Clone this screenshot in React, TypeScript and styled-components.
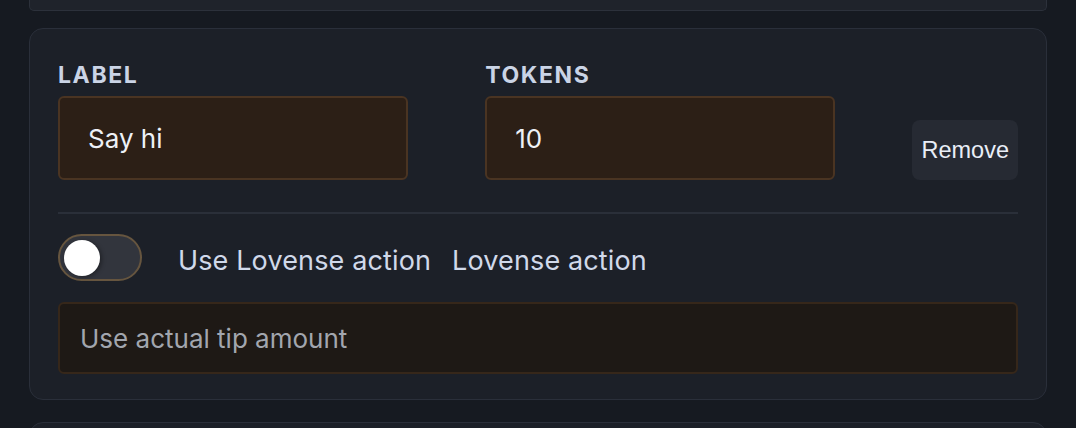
import React, { useState } from 'react';
import styled, { createGlobalStyle } from 'styled-components';

const GlobalStyle = createGlobalStyle`
  html, body {
    margin: 0;
    padding: 0;
    background: #161a21;
    font-family: Inter, "Noto Sans", sans-serif;
    overflow: hidden;
  }
`;

const Page = styled.div`
  padding: 0 29px;
  display: flex;
  flex-direction: column;
`;

const CardStub = styled.div`
  height: 10px;
  background: #1f232b;
  border: 1px solid #2c313b;
  border-top: none;
  border-radius: 0 0 5px 5px;
  margin-bottom: 17px;
`;

const Card = styled.section<{ $cut?: boolean }>`
  background: #1c2028;
  border: 1px solid #2a2f3a;
  border-radius: 14px;
  padding: ${(p) => (p.$cut ? '0' : '32px 28px 25px')};
  height: ${(p) => (p.$cut ? '40px' : 'auto')};
  margin-bottom: 22px;
`;

const TopRow = styled.div`
  display: grid;
  grid-template-columns: 1fr 1fr auto;
  column-gap: 77px;
  align-items: end;
`;

const Field = styled.label`
  display: flex;
  flex-direction: column;
  gap: 6px;
`;

const FieldLabel = styled.span`
  font-size: 23px;
  line-height: 29px;
  font-weight: 700;
  letter-spacing: 0.07em;
  text-transform: uppercase;
  color: #cad4e6;
`;

const TextInput = styled.input<{ $muted?: boolean }>`
  box-sizing: border-box;
  width: 100%;
  height: ${(p) => (p.$muted ? '72px' : '84px')};
  padding: ${(p) => (p.$muted ? '0 20px' : '0 28px')};
  border: 2px solid ${(p) => (p.$muted ? '#36271a' : '#4a3422')};
  border-radius: 6px;
  background: ${(p) => (p.$muted ? '#1e1915' : '#2c1f16')};
  color: #eef1f6;
  font-family: Inter, "Noto Sans", sans-serif;
  font-size: 26px;
  outline: none;

  &::placeholder {
    color: #a2a6ae;
  }
`;

const RemoveButton = styled.button`
  height: 60px;
  padding: 0 9px;
  border: none;
  border-radius: 8px;
  background: #262a33;
  color: #e9eef7;
  font-family: "Liberation Sans", Arial, sans-serif;
  font-size: 23.5px;
  cursor: pointer;
`;

const Divider = styled.hr`
  height: 2px;
  margin: 32px 0 20px;
  border: none;
  background: #2a2f39;
`;

const ToggleRow = styled.div`
  display: flex;
  align-items: center;
  gap: 21px;
`;

const Switch = styled.button<{ $on: boolean }>`
  box-sizing: border-box;
  width: 84px;
  height: 47px;
  margin-right: 15px;
  padding: 0 4px;
  display: flex;
  align-items: center;
  justify-content: ${(p) => (p.$on ? 'flex-end' : 'flex-start')};
  border: 2px solid #66553f;
  border-radius: 24px;
  background: ${(p) => (p.$on ? '#7a5a30' : '#32353d')};
  cursor: pointer;
`;

const Knob = styled.span`
  width: 36px;
  height: 36px;
  border-radius: 50%;
  background: #ffffff;
  box-shadow: 2px 1px 4px rgba(0, 0, 0, 0.35);
`;

const ToggleText = styled.span`
  padding-top: 6px;
  font-size: 27px;
  letter-spacing: 0.005em;
  color: #d0d9ea;
`;

const ActionInput = styled(TextInput)`
  margin-top: 21px;
`;

export default function App() {
  const [label, setLabel] = useState('Say hi');
  const [tokens, setTokens] = useState('10');
  const [useLovense, setUseLovense] = useState(false);

  return (
    <>
      <GlobalStyle />
      <Page>
        <CardStub />
        <Card>
          <TopRow>
            <Field>
              <FieldLabel>Label</FieldLabel>
              <TextInput value={label} onChange={(e) => setLabel(e.target.value)} />
            </Field>
            <Field>
              <FieldLabel>Tokens</FieldLabel>
              <TextInput value={tokens} onChange={(e) => setTokens(e.target.value)} />
            </Field>
            <RemoveButton>Remove</RemoveButton>
          </TopRow>
          <Divider />
          <ToggleRow>
            <Switch
              role="switch"
              aria-checked={useLovense}
              $on={useLovense}
              onClick={() => setUseLovense(!useLovense)}
            >
              <Knob />
            </Switch>
            <ToggleText>Use Lovense action</ToggleText>
            <ToggleText>Lovense action</ToggleText>
          </ToggleRow>
          <ActionInput $muted placeholder="Use actual tip amount" />
        </Card>
        <Card $cut />
      </Page>
    </>
  );
}
